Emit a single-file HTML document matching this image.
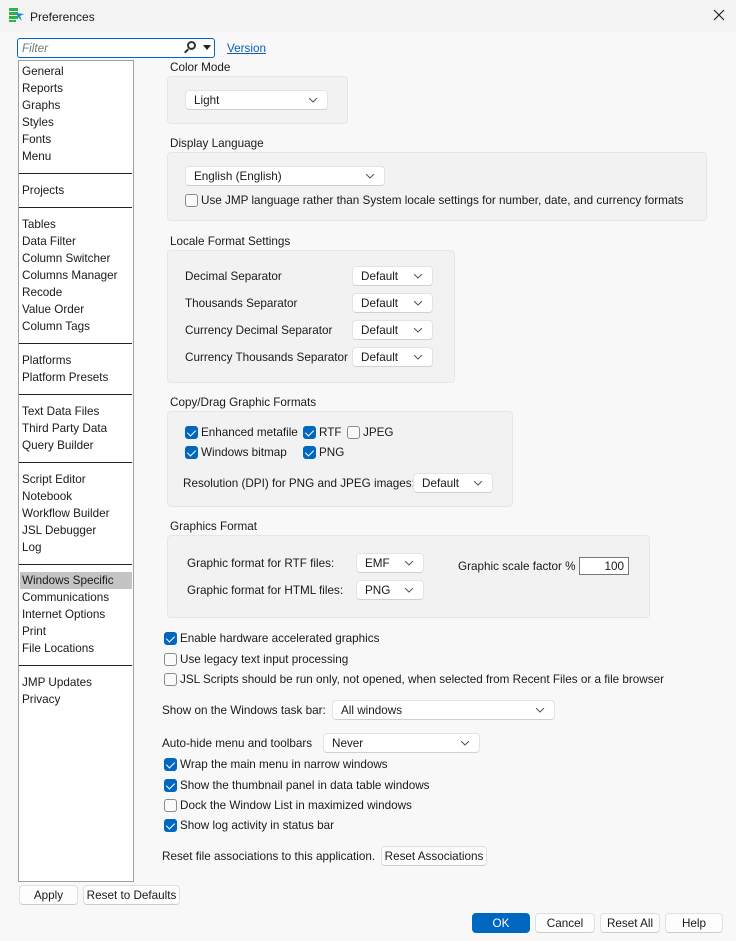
<!DOCTYPE html>
<html><head><meta charset="utf-8"><style>
*{box-sizing:border-box;margin:0;padding:0}
body{width:736px;height:941px;background:#f8f8f8;font-family:"Liberation Sans",sans-serif;font-size:11.7px;color:#1a1a1a;position:relative;overflow:hidden}
.a{position:absolute;white-space:nowrap}
.t{position:absolute;white-space:nowrap;line-height:14px;transform:translateY(-6px)}
.g{position:absolute;background:#f2f2f2;border:1px solid #e6e6e6;border-radius:4px}
.dd{position:absolute;background:#fff;border:1px solid #e3e3e3;border-bottom-color:#d0d0d0;border-radius:4px;height:20px;line-height:19px;padding-left:8px}
.dd svg{position:absolute;right:9px;top:7px}
.cb{position:absolute;width:13px;height:13px;border-radius:3px;border:1px solid #8a8a8a;background:#fbfbfb}
.cb.on{background:#0067c0;border-color:#0067c0}
.cb.on:after{content:"";position:absolute;left:3px;top:1px;width:4px;height:7px;border:solid #fff;border-width:0 1.5px 1.5px 0;transform:rotate(45deg)}
.btn{position:absolute;background:#fdfdfd;border:1px solid #e0e0e0;border-bottom-color:#ccc;border-radius:4px;height:20px;line-height:19px;text-align:center}
.li{position:absolute;left:3px;line-height:17px;top:0}
.sep{position:absolute;left:0;width:113px;height:1px;background:#222}
</style></head><body>
<div class="a" style="left:0;top:0;width:736px;height:32px;background:#f3f3f3"></div>
<svg class="a" style="left:8px;top:7px" width="18" height="16" viewBox="0 0 18 16"><rect x="1" y="1" width="9" height="3" fill="#2fb24a"/><rect x="1" y="5" width="9" height="3" fill="#2fb24a"/><rect x="1" y="9" width="9" height="3" fill="#2fb24a"/><rect x="1" y="13" width="7" height="2" fill="#2fb24a"/><path d="M8 6 L16 7 L12 9 L14 14 L10 10 Z" fill="#1a8ad4"/></svg>
<div class="t" style="left:30px;top:16px;font-size:12px">Preferences</div>
<svg class="a" style="left:713px;top:9px" width="12" height="12"><path d="M1 1L11 11M11 1L1 11" stroke="#222" stroke-width="1.2"/></svg>

<div class="a" style="left:17px;top:38px;width:198px;height:20px;background:#fff;border:1px solid #0067c0;border-radius:3px"></div>
<div class="t" style="left:22px;top:48px;color:#777;font-style:italic">Filter</div>
<div class="a" style="left:187px;top:41px;width:9px;height:9px;border:2px solid #333;border-radius:50%"></div>
<div class="a" style="left:184px;top:50px;width:5px;height:2px;background:#333;transform:rotate(-45deg)"></div>
<svg class="a" style="left:203px;top:45px" width="8" height="5"><path d="M0 0H8L4 5Z" fill="#222"/></svg>
<div class="t" style="left:227px;top:48px;color:#0a5fb4;text-decoration:underline">Version</div>

<div class="a" style="left:18px;top:60px;width:116px;height:822px;background:#fff;border:1px solid #a0a0a0">
<div style="position:absolute;left:0;top:1px">
<div class="li" style="top:1px">General</div><div class="li" style="top:18px">Reports</div><div class="li" style="top:35px">Graphs</div><div class="li" style="top:52px">Styles</div><div class="li" style="top:69px">Fonts</div><div class="li" style="top:86px">Menu</div>
<div class="sep" style="top:111px"></div>
<div class="li" style="top:120px">Projects</div>
<div class="sep" style="top:145px"></div>
<div class="li" style="top:154px">Tables</div><div class="li" style="top:171px">Data Filter</div><div class="li" style="top:188px">Column Switcher</div><div class="li" style="top:205px">Columns Manager</div><div class="li" style="top:222px">Recode</div><div class="li" style="top:239px">Value Order</div><div class="li" style="top:256px">Column Tags</div>
<div class="sep" style="top:281px"></div>
<div class="li" style="top:290px">Platforms</div><div class="li" style="top:307px">Platform Presets</div>
<div class="sep" style="top:332px"></div>
<div class="li" style="top:341px">Text Data Files</div><div class="li" style="top:358px">Third Party Data</div><div class="li" style="top:375px">Query Builder</div>
<div class="sep" style="top:400px"></div>
<div class="li" style="top:409px">Script Editor</div><div class="li" style="top:426px">Notebook</div><div class="li" style="top:443px">Workflow Builder</div><div class="li" style="top:460px">JSL Debugger</div><div class="li" style="top:477px">Log</div>
<div class="sep" style="top:502px"></div>
<div class="a" style="left:1px;top:510px;width:112px;height:17px;background:#c4c4c4"></div>
<div class="li" style="top:510px">Windows Specific</div><div class="li" style="top:527px">Communications</div><div class="li" style="top:544px">Internet Options</div><div class="li" style="top:561px">Print</div><div class="li" style="top:578px">File Locations</div>
<div class="sep" style="top:603px"></div>
<div class="li" style="top:612px">JMP Updates</div><div class="li" style="top:629px">Privacy</div>
</div></div>

<svg width="0" height="0" style="position:absolute"><defs><path id="ch" d="M0 0L4 4L8 0" stroke="#555" fill="none" stroke-width="1"/></defs></svg>

<div class="t" style="left:170px;top:67px">Color Mode</div>
<div class="g" style="left:167px;top:76px;width:181px;height:48px"></div>
<div class="dd" style="left:185px;top:90px;width:143px">Light<svg width="9" height="5"><use href="#ch"/></svg></div>

<div class="t" style="left:170px;top:143px">Display Language</div>
<div class="g" style="left:167px;top:152px;width:540px;height:69px"></div>
<div class="dd" style="left:185px;top:166px;width:200px">English (English)<svg width="9" height="5"><use href="#ch"/></svg></div>
<div class="cb" style="left:185px;top:194px"></div>
<div class="t" style="left:201px;top:200px">Use JMP language rather than System locale settings for number, date, and currency formats</div>

<div class="t" style="left:170px;top:241px">Locale Format Settings</div>
<div class="g" style="left:167px;top:250px;width:288px;height:133px"></div>
<div class="t" style="left:185px;top:276px">Decimal Separator</div>
<div class="t" style="left:185px;top:303px">Thousands Separator</div>
<div class="t" style="left:185px;top:330px">Currency Decimal Separator</div>
<div class="t" style="left:185px;top:357px">Currency Thousands Separator</div>
<div class="dd" style="left:352px;top:266px;width:81px">Default<svg width="9" height="5"><use href="#ch"/></svg></div>
<div class="dd" style="left:352px;top:293px;width:81px">Default<svg width="9" height="5"><use href="#ch"/></svg></div>
<div class="dd" style="left:352px;top:320px;width:81px">Default<svg width="9" height="5"><use href="#ch"/></svg></div>
<div class="dd" style="left:352px;top:347px;width:81px">Default<svg width="9" height="5"><use href="#ch"/></svg></div>

<div class="t" style="left:170px;top:402px">Copy/Drag Graphic Formats</div>
<div class="g" style="left:167px;top:411px;width:346px;height:96px"></div>
<div class="cb on" style="left:185px;top:426px"></div><div class="t" style="left:201px;top:432px">Enhanced metafile</div>
<div class="cb on" style="left:303px;top:426px"></div><div class="t" style="left:319px;top:432px">RTF</div>
<div class="cb" style="left:347px;top:426px"></div><div class="t" style="left:363px;top:432px">JPEG</div>
<div class="cb on" style="left:185px;top:446px"></div><div class="t" style="left:201px;top:452px">Windows bitmap</div>
<div class="cb on" style="left:303px;top:446px"></div><div class="t" style="left:319px;top:452px">PNG</div>
<div class="t" style="left:183px;top:483px">Resolution (DPI) for PNG and JPEG images:</div>
<div class="dd" style="left:413px;top:473px;width:80px">Default<svg width="9" height="5"><use href="#ch"/></svg></div>

<div class="t" style="left:170px;top:526px">Graphics Format</div>
<div class="g" style="left:167px;top:535px;width:483px;height:83px"></div>
<div class="t" style="left:187px;top:563px">Graphic format for RTF files:</div>
<div class="t" style="left:187px;top:590px">Graphic format for HTML files:</div>
<div class="dd" style="left:356px;top:553px;width:68px">EMF<svg width="9" height="5"><use href="#ch"/></svg></div>
<div class="dd" style="left:356px;top:580px;width:68px">PNG<svg width="9" height="5"><use href="#ch"/></svg></div>
<div class="t" style="left:458px;top:566px">Graphic scale factor %</div>
<div class="a" style="left:579px;top:557px;width:50px;height:18px;background:#fff;border:1px solid #777;text-align:right;padding-right:4px;line-height:17px">100</div>

<div class="cb on" style="left:164px;top:632px"></div><div class="t" style="left:180px;top:638px">Enable hardware accelerated graphics</div>
<div class="cb" style="left:164px;top:653px"></div><div class="t" style="left:180px;top:659px">Use legacy text input processing</div>
<div class="cb" style="left:164px;top:673px"></div><div class="t" style="left:180px;top:679px">JSL Scripts should be run only, not opened, when selected from Recent Files or a file browser</div>

<div class="t" style="left:162px;top:710px">Show on the Windows task bar:</div>
<div class="dd" style="left:332px;top:700px;width:223px">All windows<svg width="9" height="5"><use href="#ch"/></svg></div>
<div class="t" style="left:162px;top:743px">Auto-hide menu and toolbars</div>
<div class="dd" style="left:323px;top:733px;width:157px">Never<svg width="9" height="5"><use href="#ch"/></svg></div>

<div class="cb on" style="left:164px;top:758px"></div><div class="t" style="left:180px;top:764px">Wrap the main menu in narrow windows</div>
<div class="cb on" style="left:164px;top:779px"></div><div class="t" style="left:180px;top:785px">Show the thumbnail panel in data table windows</div>
<div class="cb" style="left:164px;top:799px"></div><div class="t" style="left:180px;top:805px">Dock the Window List in maximized windows</div>
<div class="cb on" style="left:164px;top:819px"></div><div class="t" style="left:180px;top:825px">Show log activity in status bar</div>

<div class="t" style="left:162px;top:856px">Reset file associations to this application.</div>
<div class="btn" style="left:381px;top:846px;width:106px">Reset Associations</div>

<div class="btn" style="left:19px;top:885px;width:59px">Apply</div>
<div class="btn" style="left:83px;top:885px;width:97px">Reset to Defaults</div>

<div class="btn" style="left:472px;top:913px;width:58px;background:#0067c0;border-color:#0067c0;color:#fff">OK</div>
<div class="btn" style="left:535px;top:913px;width:60px">Cancel</div>
<div class="btn" style="left:600px;top:913px;width:60px">Reset All</div>
<div class="btn" style="left:665px;top:913px;width:58px">Help</div>
</body></html>
